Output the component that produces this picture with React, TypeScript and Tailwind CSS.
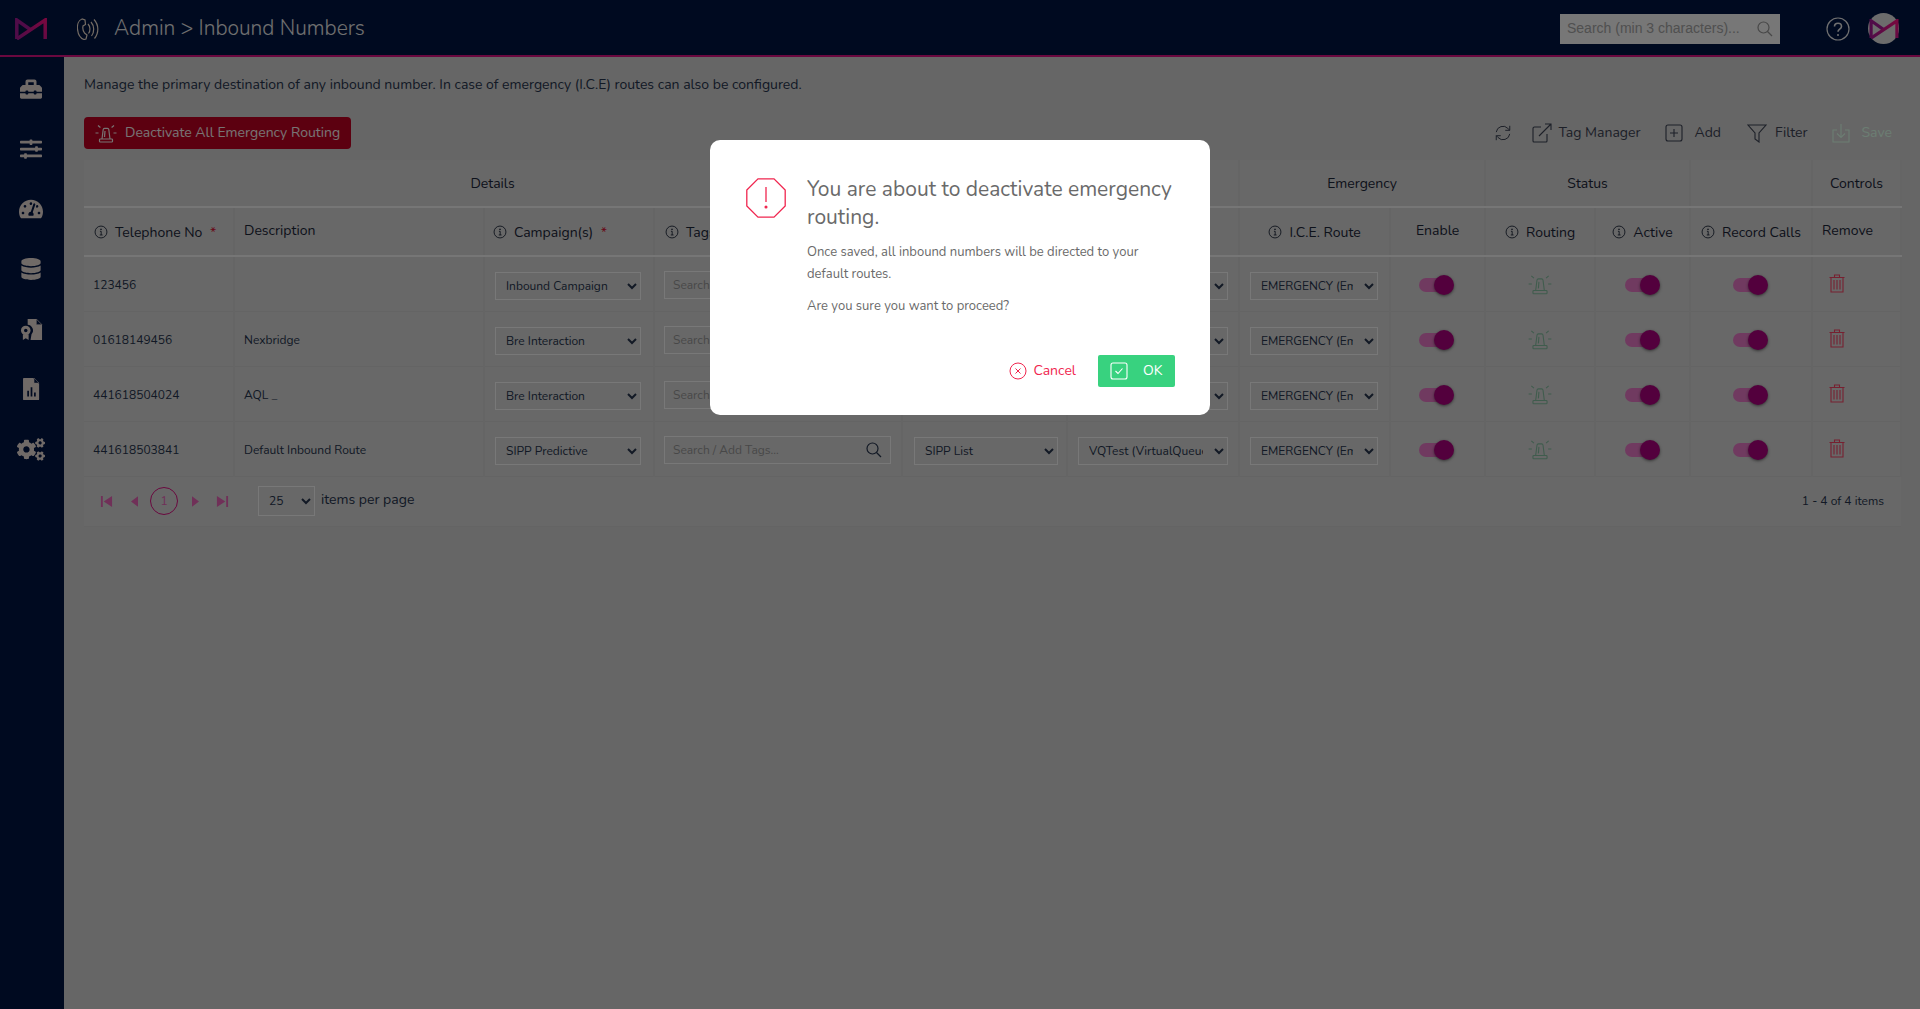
import React from "react";
import { FaToolbox, FaSlidersH, FaTachometerAlt, FaDatabase, FaCogs } from "react-icons/fa";

const font = { fontFamily: "Nunito, Lato, 'Noto Sans', sans-serif" };

function Logo({ className }: { className?: string }) {
  return (
    <svg viewBox="0 0 32 22" className={className} fill="none" strokeWidth="3.5">
      <defs>
        <linearGradient id="lg" x1="0" y1="1" x2="1" y2="0">
          <stop offset="0" stopColor="#a01890" />
          <stop offset="1" stopColor="#f0107e" />
        </linearGradient>
      </defs>
      <path d="M1.800 21V2L16 12" stroke="#a01890" />
      <path d="M1.800 21L30.200 2V21" stroke="url(#lg)" />
    </svg>
  );
}

function Alarm({ className, strokeWidth = 1.2 }: { className?: string; strokeWidth?: number }) {
  return (
    <svg viewBox="0 0 24 24" className={className} fill="none" stroke="currentColor" strokeWidth={strokeWidth}>
      <path d="M8 18l1.2-9.5c.1-.8.6-1.2 1.3-1.2h3c.7 0 1.2.4 1.3 1.2L16 18" />
      <path d="M11 10l-.5 6" />
      <rect x="5.500" y="18" width="13" height="3" rx=".8" />
      <path d="M1.500 12h3M19.500 12h3M4 4.500l2.400 2M20 4.500l-2.400 2" />
    </svg>
  );
}

function Info() {
  return (
    <svg viewBox="0 0 16 16" className="mr-[7px] inline-block h-[14px] w-[14px] align-[-2px]" fill="none" stroke="currentColor" strokeWidth="1">
      <circle cx="8" cy="8" r="6.800" />
      <path d="M6.800 7.200H8.200V11.400M6.600 11.400H9.800" />
      <circle cx="8" cy="4.900" r=".5" fill="currentColor" />
    </svg>
  );
}

function Toggle({ className = "mx-auto" }: { className?: string }) {
  return (
    <div className={`relative h-[14px] w-9 ${className}`}>
      <div className="h-[14px] w-[28px] rounded-full bg-[#e075c0]" />
      <div className="absolute left-[15px] top-[-3px] h-5 w-5 rounded-full bg-[#a6007a] shadow-[0_1px_3px_rgba(0,0,0,0.5)]" />
    </div>
  );
}

function Trash() {
  return (
    <svg viewBox="0 0 16 19" className="ml-[6px] h-[19px] w-4 -translate-y-[2px] text-[#ee4060]" fill="none" stroke="currentColor" strokeWidth="1.1">
      <path d="M.5 3.500h15M5.500 3.500V1h5v2.500M2 3.500V18h12V3.500M5 6v9.500M8 6v9.500M11 6v9.500" />
    </svg>
  );
}

function Sel({ w, value }: { w: string; value: string }) {
  return (
    <select
      defaultValue={value}
      className={`${w} mt-[2px] h-7 border border-[#f0f0f0] bg-[#d0d0d0] pl-[6px] pr-2 text-[12px] text-[#25324a] outline-none`}
      style={font}
    >
      <option>{value}</option>
    </select>
  );
}

const rows = [
  { tel: "123456", desc: "", camp: "Inbound Campaign", list: "SIPP List", q: "VQTest (VirtualQueue)" },
  { tel: "01618149456", desc: "Nexbridge", camp: "Bre Interaction", list: "SIPP List", q: "VQTest (VirtualQueue)" },
  { tel: "441618504024", desc: "AQL _", camp: "Bre Interaction", list: "SIPP List", q: "VQTest (VirtualQueue)" },
  { tel: "441618503841", desc: "Default Inbound Route", camp: "SIPP Predictive", list: "SIPP List", q: "VQTest (VirtualQueue)" },
];

const cell = "border-r-2 border-b border-r-[#cacaca] border-b-[#c9c9c9] pr-[10px] pt-[3px]";
const head2 = "border-r-2 border-b-2 border-r-[#cacaca] border-b-[#ececec] font-normal";
const head2i = "border-r-2 border-b-2 border-r-[#cacaca] border-b-[#ececec] pt-[2px] font-normal";
const head1 = "border-r-2 border-b-2 border-r-[#cacaca] border-b-[#ececec] text-center font-normal";
const sideSlot = "flex h-[60px] items-center justify-center";

export default function App() {
  return (
    <div className="relative flex h-[1009px] w-[1920px] flex-col overflow-hidden bg-[#cccccc] text-[#1a2436]" style={font}>
      <header className="flex h-[57px] shrink-0 items-center border-b-2 border-[#d4107e] bg-[#001440] pt-[2px] text-[#e0e0e0]">
        <div className="flex w-16 justify-center pr-[2px]">
          <Logo className="h-[22px] w-8" />
        </div>
        <svg viewBox="0 0 22 22" className="ml-[13px] h-[22px] w-[22px] text-[#e8d8c8]" fill="none" stroke="currentColor" strokeWidth="1.2">
          <path d="M5 1C2 2 0 6 .5 11c.5 5 2.500 9 6.500 10.500l2-.5 1-4-2.500-2C6 13 5.500 10.500 6 8l2.500-1.500L8 2z" />
          <path d="M11 6c2.500 2.500 2.500 7 .5 9.500M14 4c3.500 4 3.500 10 .5 14M17 1.500c5 5.500 5 13.500.5 19" />
        </svg>
        <div className="ml-[15px] text-[21px] font-light leading-none">Admin &gt; Inbound Numbers</div>
        <div className="ml-auto flex h-[30px] w-[220px] items-center justify-between bg-[#eeeeee] px-[7px] text-[14px] text-[#a0a0a0]" style={{ fontFamily: "'Liberation Sans', sans-serif" }}>
          <span>Search (min 3 characters)...</span>
          <svg viewBox="0 0 16 16" className="h-4 w-4" fill="none" stroke="#909090" strokeWidth="1.2"><circle cx="6.500" cy="6.500" r="5.500" /><path d="M10.500 10.500l4.500 4.500" /></svg>
        </div>
        <svg viewBox="0 0 24 24" className="ml-[46px] h-[24px] w-[24px]" fill="none" stroke="#e0e0e0" strokeWidth="1.2">
          <circle cx="12" cy="12" r="11" />
          <path d="M8.500 9.500c0-2 1.600-3.300 3.500-3.300s3.500 1.300 3.500 3.200c0 2.600-3.500 2.800-3.500 5.300" strokeWidth="1.600" />
          <circle cx="12" cy="18" r="1" fill="#e0e0e0" stroke="none" />
        </svg>
        <div className="ml-[18px] mr-[21px] flex h-[31px] w-[31px] items-center justify-center rounded-full bg-[#d8d8d8]">
          <Logo className="h-[20px] w-[30px]" />
        </div>
      </header>
      <div className="flex min-h-0 flex-1">
        <aside className="flex w-16 shrink-0 flex-col bg-[#001440] pr-[2px] pt-[2px] text-[#e0d4cf]">
          <div className={sideSlot}><FaToolbox className="h-[22px] w-[22px]" /></div>
          <div className={sideSlot}><FaSlidersH className="h-[22px] w-[22px]" /></div>
          <div className={sideSlot}><FaTachometerAlt className="h-6 w-6" /></div>
          <div className={sideSlot}><FaDatabase className="h-[22px] w-[20px]" /></div>
          <div className={sideSlot}>
            <svg viewBox="0 0 24 24" className="h-[23px] w-[23px]" fill="currentColor">
              <path d="M8 1h9l6 6v16H11l1-6a6 6 0 0 0-4-10z" />
              <path d="M17 1l6 6h-6z" fill="#001440" stroke="currentColor" strokeWidth=".6" />
              <circle cx="6" cy="13" r="5" /><circle cx="6" cy="13" r="1.800" fill="#001440" />
              <path d="M3 17v6l3-2 3 2v-6z" />
            </svg>
          </div>
          <div className={sideSlot}>
            <svg viewBox="0 0 20 26" className="h-[22px] w-[17px]" fill="currentColor">
              <path fillRule="evenodd" d="M1 0h11l7 7v18a1 1 0 0 1-1 1H1a1 1 0 0 1-1-1V1a1 1 0 0 1 1-1zM5 15v7h2v-7zM9 11v11h2V11zM13 17v5h2v-5z" />
              <path d="M13 0l6 6h-6z" fill="#001440" stroke="currentColor" strokeWidth=".6" />
            </svg>
          </div>
          <div className={sideSlot}><FaCogs className="h-[23px] w-[28px]" /></div>
        </aside>
        <main className="min-w-0 flex-1 pl-5 pr-[19px]">
          <p className="mt-[18px] text-[14px] leading-5 text-[#25324a]">Manage the primary destination of any inbound number. In case of emergency (I.C.E) routes can also be configured.</p>
          <div className="mt-[22px] flex h-8 items-center">
            <button className="flex h-8 w-[267px] items-center gap-[7px] rounded-[4px] bg-[#b80020] pl-[10px] text-[14px] text-[#f0e8e8]">
              <Alarm className="h-6 w-6" />
              <span className="-mt-[2px]">Deactivate All Emergency Routing</span>
            </button>
            <div className="ml-auto flex items-center pr-[9px] text-[14px] text-[#3a4050]">
              <svg viewBox="0 0 20 20" className="h-[18px] w-[18px]" fill="none" stroke="currentColor" strokeWidth="1.1"><path d="M2.500 9a7.500 7.500 0 0 1 13-4l2 2M17.500 11a7.500 7.500 0 0 1-13 4l-2-2M17.500 2v5h-5M2.500 18v-5h5" /></svg>
              <svg viewBox="0 0 20 20" className="ml-[20px] h-5 w-5" fill="none" stroke="currentColor" strokeWidth="1.1"><path d="M9 4H2.500A1.500 1.500 0 0 0 1 5.500V18a1 1 0 0 0 1 1h12a1 1 0 0 0 1-1v-7M7 13L19 1M13 1h6v6" /></svg>
              <span className="ml-[6px] -mt-[2px]">Tag Manager</span>
              <svg viewBox="0 0 18 18" className="ml-[24px] h-[18px] w-[18px]" fill="none" stroke="currentColor" strokeWidth="1.1"><rect x="1" y="1" width="16" height="16" rx="2" /><path d="M9 5v8M5 9h8" /></svg>
              <span className="ml-[12px] -mt-[2px]">Add</span>
              <svg viewBox="0 0 20 20" className="ml-[26px] h-5 w-5" fill="none" stroke="currentColor" strokeWidth="1.1"><path d="M1 2h18l-7 8v9l-4-3v-6z" /></svg>
              <span className="ml-[8px] -mt-[2px]">Filter</span>
              <svg viewBox="0 0 20 20" className="ml-[24px] h-5 w-5 text-[#d8fbe6]" fill="none" stroke="currentColor" strokeWidth="1.1"><path d="M6 7H2v12h16V7h-4M10 1v13M6 10.500l4 4 4-4" /></svg>
              <span className="ml-[10px] -mt-[2px] text-[#d8fbe6]">Save</span>
            </div>
          </div>
          <table className="mt-[11px] w-[1817px] table-fixed border-collapse bg-[#d0d0d0] text-[14px]">
            <colgroup>
              <col className="w-[150px]" /><col className="w-[250px]" /><col className="w-[170px]" /><col className="w-[248px]" /><col className="w-[165px]" /><col className="w-[172px]" />
              <col className="w-[151px]" /><col className="w-[95px]" /><col className="w-[110px]" /><col className="w-[95px]" /><col className="w-[122px]" /><col className="w-[89px]" />
            </colgroup>
            <thead>
              <tr className="h-[47px]">
                <th colSpan={4} className={head1}>Details</th>
                <th colSpan={2} className={head1}>Routing</th>
                <th colSpan={2} className={head1}>Emergency</th>
                <th colSpan={2} className={head1}>Status</th>
                <th className={head1}></th>
                <th className={head1}>Controls</th>
              </tr>
              <tr className="h-[49px]">
                <th className={`${head2i} pl-[10px] text-left`}><Info />Telephone No <span className="ml-[4px] text-[#d01030]">*</span></th>
                <th className={`${head2} pl-[9px] text-left`}><span className="relative -top-[1px]">Description</span></th>
                <th className={`${head2i} pl-[8px] text-left`}><Info />Campaign(s) <span className="ml-[4px] text-[#d01030]">*</span></th>
                <th className={`${head2i} pl-[10px] text-left`}><Info />Tags</th>
                <th className={`${head2i} pl-[10px] text-left`}><Info />List</th>
                <th className={`${head2i} pl-[10px] text-left`}><Info />Queue</th>
                <th className={`${head2i} text-center`}><Info />I.C.E. Route</th>
                <th className={`${head2} text-center`}><span className="relative -top-[1px]">Enable</span></th>
                <th className={`${head2i} text-center`}><Info />Routing</th>
                <th className={`${head2i} text-center`}><Info />Active</th>
                <th className={`${head2i} text-center`}><Info />Record Calls</th>
                <th className={`${head2} pl-[9px] text-left`}><span className="relative -top-[1px]">Remove</span></th>
              </tr>
            </thead>
            <tbody className="text-[12px] text-[#25324a]">
              {rows.map((r) => (
                <tr key={r.tel} className="h-[55px]">
                  <td className={`${cell} pl-[9px]`}>{r.tel}</td>
                  <td className={`${cell} pl-[9px]`}>{r.desc}</td>
                  <td className={`${cell} pl-[10px]`}><Sel w="w-[146px]" value={r.camp} /></td>
                  <td className={`${cell} pl-[9px]`}>
                    <div className="flex h-7 w-[227px] items-center justify-between border border-[#f0f0f0] px-2 text-[#909090]">
                      <span>Search / Add Tags...</span>
                      <svg viewBox="0 0 16 16" className="h-4 w-4" fill="none" stroke="#25324a" strokeWidth="1.2"><circle cx="6.500" cy="6.500" r="5.500" /><path d="M10.500 10.500l4.500 4.500" /></svg>
                    </div>
                  </td>
                  <td className={`${cell} pl-[11px]`}><Sel w="w-[144px]" value={r.list} /></td>
                  <td className={`${cell} pl-[10px]`}><Sel w="w-[150px]" value={r.q} /></td>
                  <td className={`${cell} pl-[10px]`}><Sel w="w-[128px]" value="EMERGENCY (Emergency)" /></td>
                  <td className={`${cell} pl-[8px]`}><Toggle /></td>
                  <td className={`${cell} pl-[9px] text-[#7fb89a]`}><Alarm className="mx-auto h-[26px] w-[26px] -translate-y-[1px]" strokeWidth={1} /></td>
                  <td className={`${cell} pl-[10px]`}><Toggle /></td>
                  <td className={`${cell} pl-[10px]`}><Toggle /></td>
                  <td className={`${cell} pl-[10px]`}><Trash /></td>
                </tr>
              ))}
            </tbody>
          </table>
          <div className="flex h-[50px] w-[1817px] items-center border-b border-[#c9c9c9] bg-[#d0d0d0] pl-[16px] pr-[17px] text-[14px] text-[#25324a]">
            <svg viewBox="0 0 14 14" className="h-[13px] w-[13px] text-[#e060b0]" fill="currentColor"><path d="M1 1h2v12H1zM13 1v12L4 7z" /></svg>
            <svg viewBox="0 0 8 14" className="ml-[18px] h-[13px] w-[7px] text-[#e060b0]" fill="currentColor"><path d="M8 1v12L0 7z" /></svg>
            <div className="ml-[12px] flex h-7 w-7 items-center justify-center rounded-full border border-[#d4107e] text-[12px] text-[#e060b0]">1</div>
            <svg viewBox="0 0 8 14" className="ml-[14px] h-[13px] w-[7px] text-[#e060b0]" fill="currentColor"><path d="M0 1v12l8-6z" /></svg>
            <svg viewBox="0 0 14 14" className="ml-[17px] h-[13px] w-[13px] text-[#e060b0]" fill="currentColor"><path d="M13 1h-2v12h2zM1 1v12l9-6z" /></svg>
            <select defaultValue="25" className="ml-[29px] h-[30px] w-[57px] border border-[#f0f0f0] pl-[6px] text-[12px]" style={font}><option>25</option></select>
            <span className="ml-[6px] -mt-[3px]">items per page</span>
            <span className="ml-auto text-[12px]">1 - 4 of 4 items</span>
          </div>
        </main>
      </div>

      <div className="absolute inset-0 bg-black/50" />
      <div className="absolute left-[710px] top-[140px] flex h-[275px] w-[500px] rounded-[10px] bg-white pl-9 pr-[35px] pt-[35px] text-[#6a6a6a]">
        <svg viewBox="0 0 40 40" className="mt-[3px] h-10 w-10 shrink-0" fill="none" stroke="#f0264f" strokeWidth="1.300">
          <path d="M12 .8h16L39.200 12v16L28 39.200H12L.8 28V12z" />
          <path d="M20 9v15" /><circle cx="20" cy="29" r=".9" fill="#f0264f" />
        </svg>
        <div className="ml-[21px] flex min-w-0 flex-1 flex-col">
          <h2 className="text-[21px] font-normal leading-7">You are about to deactivate emergency routing.</h2>
          <p className="mt-[10px] text-[13px] leading-[22px]">Once saved, all inbound numbers will be directed to your default routes.</p>
          <p className="mt-[10px] text-[13px] leading-[22px]">Are you sure you want to proceed?</p>
          <div className="mt-[38px] flex items-center justify-end">
            <svg viewBox="0 0 18 18" className="h-[18px] w-[18px]" fill="none" stroke="#f0264f" strokeWidth="1"><circle cx="9" cy="9" r="8" /><path d="M6.500 6.500l5 5M11.500 6.500l-5 5" /></svg>
            <span className="ml-[7px] -mt-[2px] text-[14px] text-[#f0264f]">Cancel</span>
            <button className="ml-[22px] flex h-8 w-[77px] items-center rounded-[2px] bg-[#38d27f] pl-[12px] text-[14px] text-white">
              <svg viewBox="0 0 18 18" className="h-[18px] w-[18px]" fill="none" stroke="white" strokeWidth="1.100"><rect x="1" y="1" width="16" height="16" rx="2" /><path d="M5.500 9l2.500 2.500 4.500-5" /></svg>
              <span className="ml-[15px] -mt-[2px]">OK</span>
            </button>
          </div>
        </div>
      </div>
    </div>
  );
}
